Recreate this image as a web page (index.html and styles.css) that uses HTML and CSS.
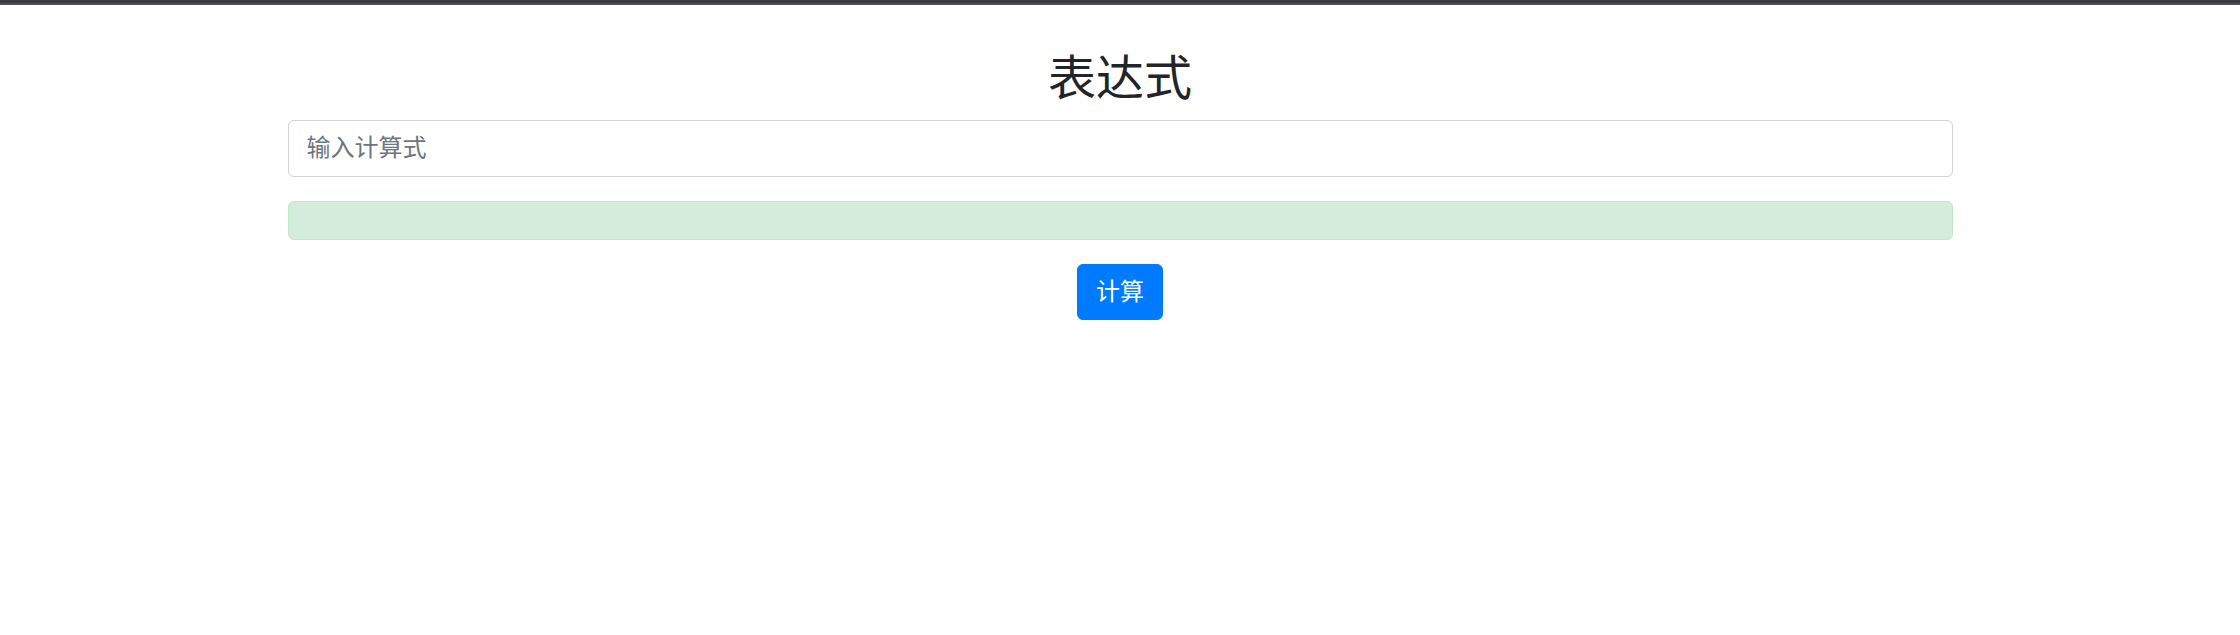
FILE: index.html
```html
<!DOCTYPE html>
<html lang="zh">
<head>
<meta charset="utf-8">
<title>表达式</title>
<link rel="stylesheet" href="styles.css">
</head>
<body>
<div class="topbar"></div>
<div class="container">
  <h2 class="title">表达式</h2>
  <div class="form-group">
    <input class="form-control" type="text" placeholder="输入计算式">
  </div>
  <div class="alert"></div>
  <div class="actions">
    <button class="btn" type="button">计算</button>
  </div>
</div>
</body>
</html>
```

FILE: styles.css
```css
* { box-sizing: border-box; }
html, body { margin: 0; padding: 0; background: #fff; }
body {
  font-family: "Liberation Sans", "Noto Sans CJK SC", sans-serif;
  color: #212529;
  font-size: 24px;
  line-height: 1.5;
}
.topbar {
  height: 5px;
  background: #3b3b3f;
  border-bottom: 2px solid #505055;
}
.container {
  width: 1710px;
  margin: 0 auto;
  padding: 45px 22.5px 0;
}
.title {
  margin: 0 0 12px;
  font-size: 48px;
  font-weight: 400;
  line-height: 1.2;
  text-align: center;
  color: #212529;
}
.form-group { margin-bottom: 24px; }
.form-control {
  display: block;
  width: 100%;
  height: 57px;
  padding: 9px 18px;
  font-family: inherit;
  font-size: 24px;
  line-height: 1.5;
  color: #495057;
  background: #fff;
  border: 1.5px solid #ced4da;
  border-radius: 6px;
  outline: none;
}
.form-control::placeholder { color: #6c757d; opacity: 1; }
.alert {
  height: 39px;
  margin-bottom: 24px;
  background: #d4edda;
  border: 1.5px solid #c3e6cb;
  border-radius: 6px;
}
.actions { text-align: center; }
.btn {
  display: inline-block;
  padding: 9px 18px;
  font-family: inherit;
  font-size: 24px;
  line-height: 1.5;
  color: #fff;
  background: #007bff;
  border: 1.5px solid #007bff;
  border-radius: 6px;
  cursor: pointer;
}
```
